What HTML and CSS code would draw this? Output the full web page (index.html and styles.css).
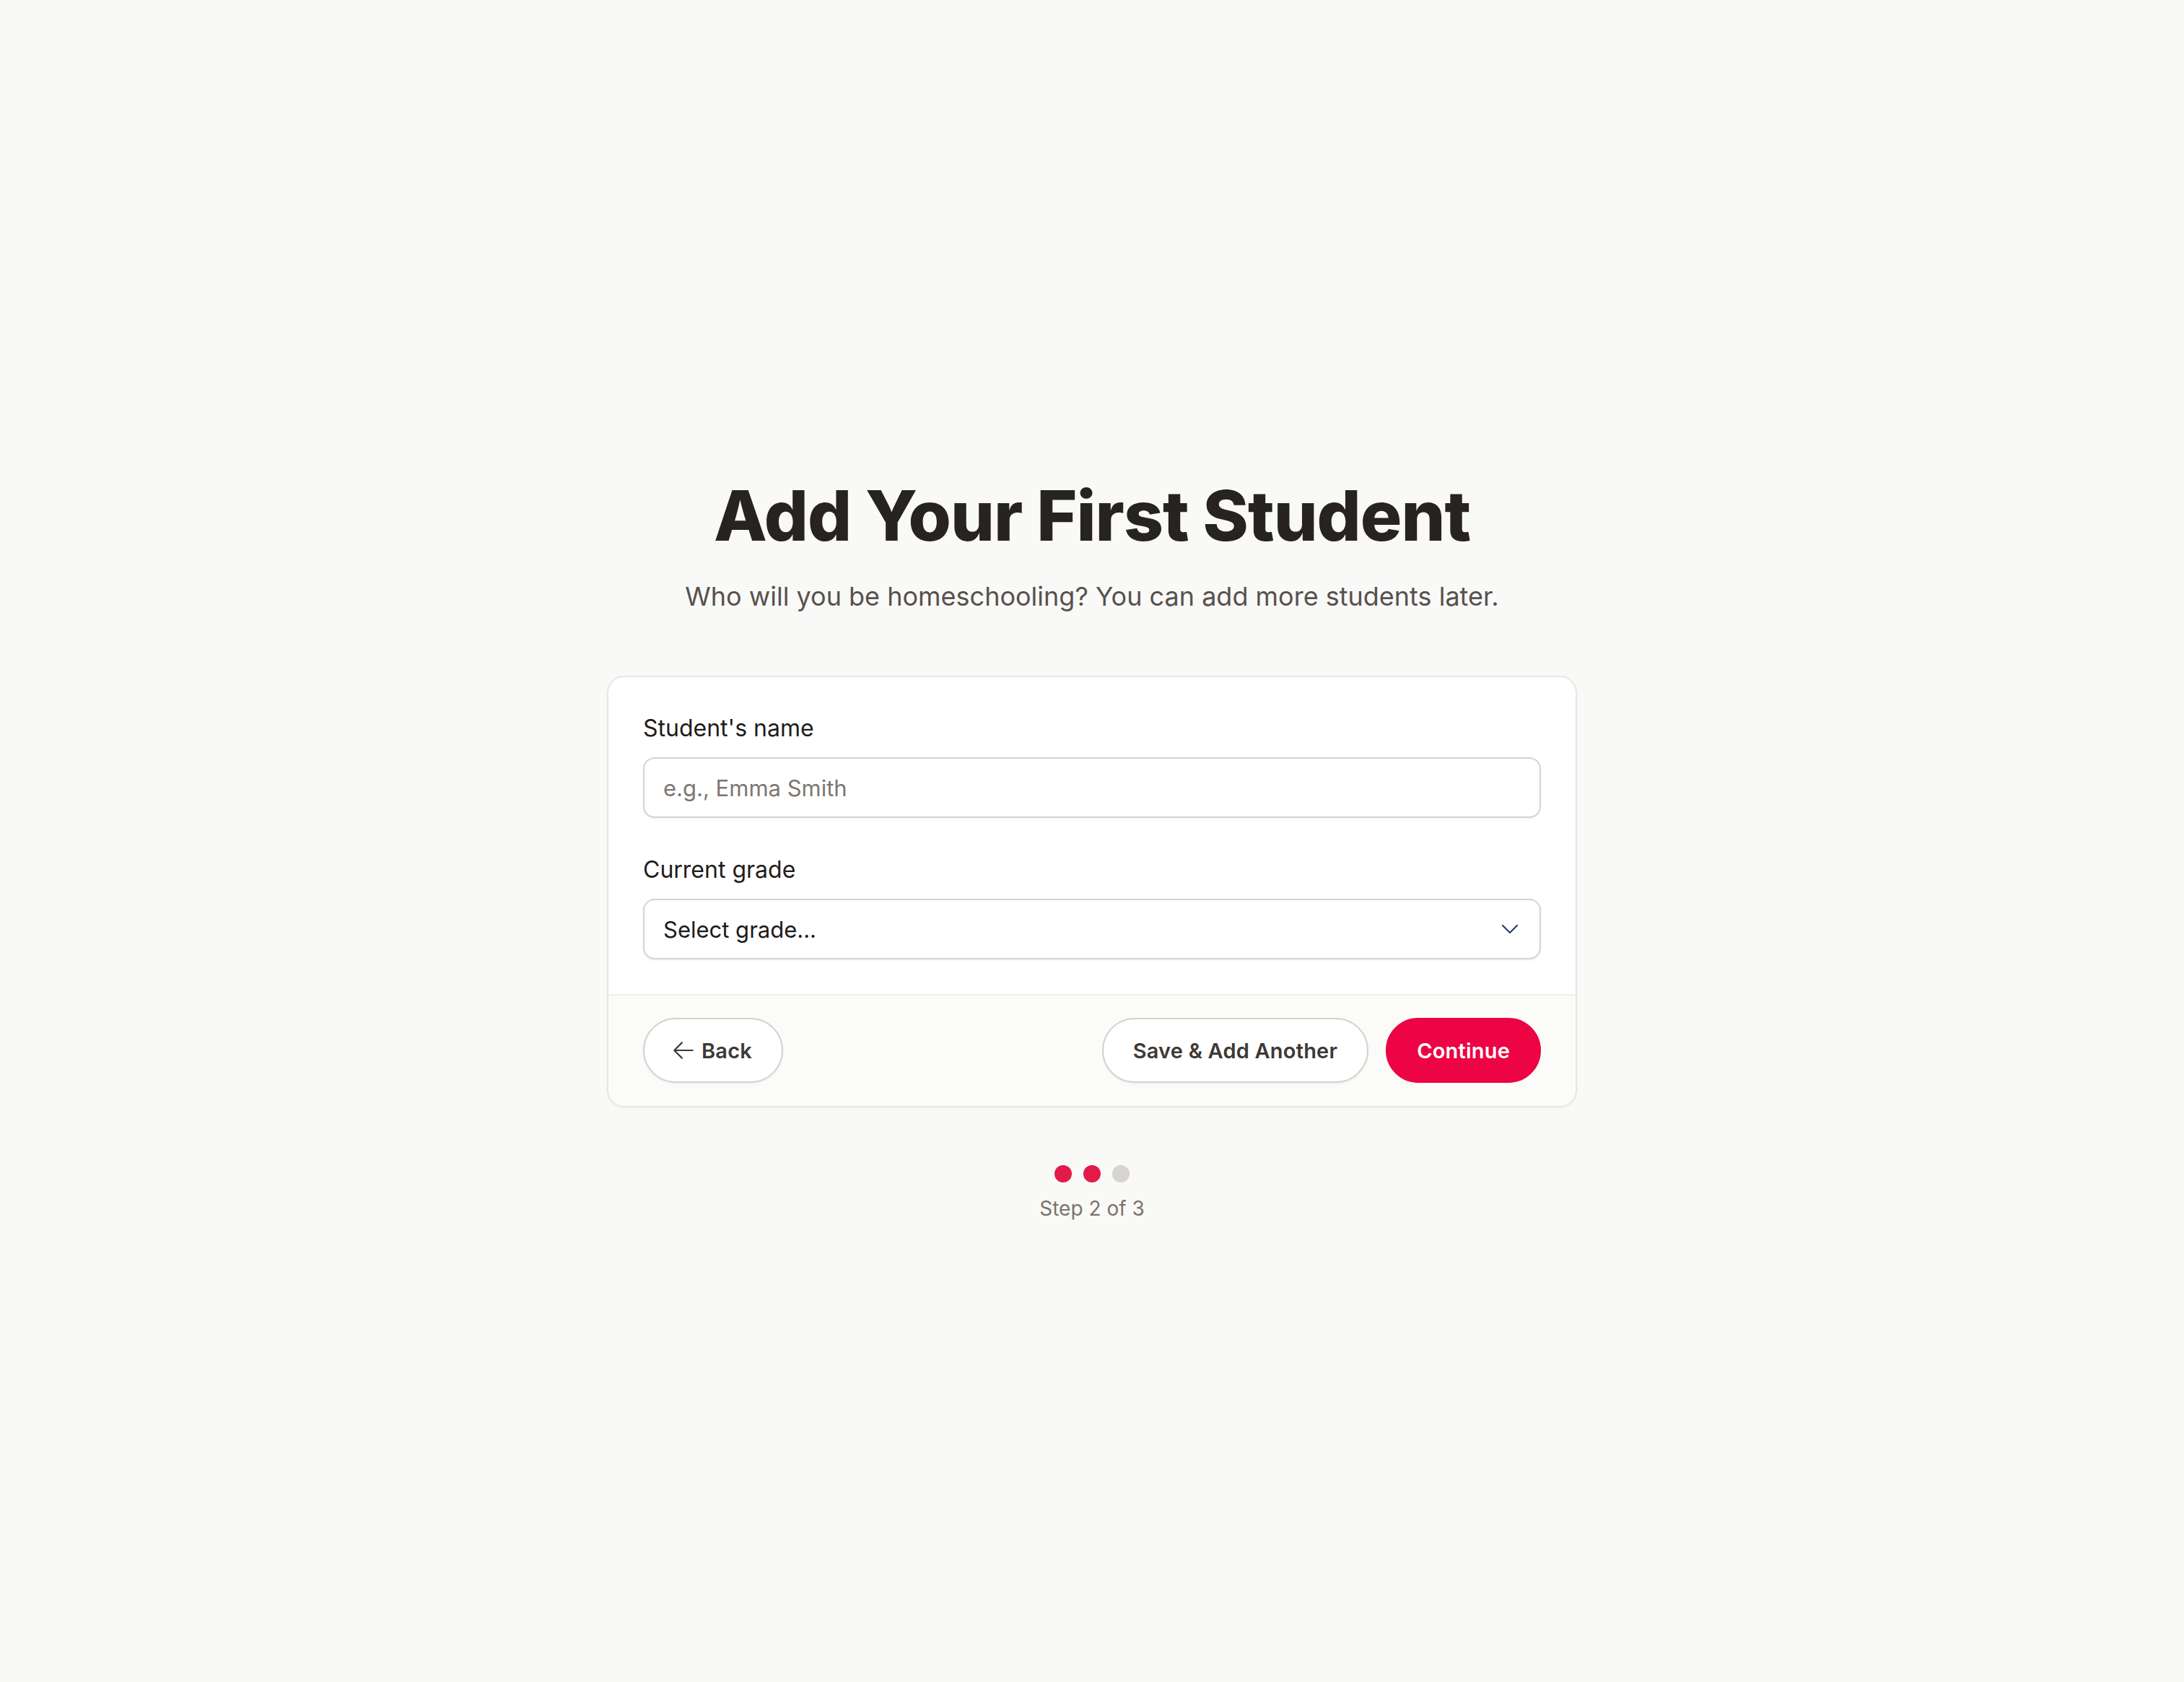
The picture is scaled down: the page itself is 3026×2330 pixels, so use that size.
FILE: index.html
```html
<!DOCTYPE html>
<html lang="en">
<head>
<meta charset="utf-8">
<title>Add Your First Student</title>
<link rel="stylesheet" href="styles.css">
</head>
<body>
<main class="page">
  <div class="wrap">
    <h1 class="title">Add Your First Student</h1>
    <p class="subtitle">Who will you be homeschooling? You can add more students later.</p>

    <section class="card">
      <div class="card-body">
        <div class="field">
          <label class="label" for="name">Student's name</label>
          <input id="name" class="input" type="text" placeholder="e.g., Emma Smith">
        </div>
        <div class="field">
          <label class="label" for="grade">Current grade</label>
          <div class="select">
            <span class="select-text">Select grade...</span>
            <svg class="chevron" viewBox="0 0 22 12" width="22" height="12" aria-hidden="true">
              <path d="M1 1l10 10L21 1" fill="none" stroke="#2d3f6e" stroke-width="2.2" stroke-linecap="round" stroke-linejoin="round"/>
            </svg>
          </div>
        </div>
      </div>
      <div class="card-footer">
        <button class="btn btn-outline" type="button">
          <svg class="arrow" viewBox="0 0 24 24" width="34" height="34" aria-hidden="true">
            <path d="M10.5 19.5 3 12m0 0 7.5-7.5M3 12h18" fill="none" stroke="#3d3935" stroke-width="1.5" stroke-linecap="round" stroke-linejoin="round"/>
          </svg>
          <span>Back</span>
        </button>
        <div class="actions">
          <button class="btn btn-outline" type="button">Save &amp; Add Another</button>
          <button class="btn btn-primary" type="button">Continue</button>
        </div>
      </div>
    </section>

    <div class="progress">
      <div class="dots">
        <span class="dot dot-on"></span>
        <span class="dot dot-on"></span>
        <span class="dot"></span>
      </div>
      <p class="step">Step 2 of 3</p>
    </div>
  </div>
</main>
</body>
</html>
```

FILE: styles.css
```css
* { box-sizing: border-box; }

html, body {
  margin: 0;
  padding: 0;
  background: #f9f9f8;
}

body {
  font-family: "Inter", "Noto Sans", "Liberation Sans", sans-serif;
  color: #1f1c1a;
}

.page {
  min-height: 100vh;
  display: flex;
  align-items: center;
  justify-content: center;
  padding: 14px 48px 0;
}

.wrap {
  width: 1344px;
  display: flex;
  flex-direction: column;
  align-items: center;
}

.title {
  margin: 0;
  font-family: "Inter", "Noto Sans", sans-serif;
  font-weight: 800;
  font-size: 96px;
  line-height: 128px;
  letter-spacing: -1px;
  color: #272322;
  text-align: center;
}

.subtitle {
  margin: 20px 0 0;
  font-size: 36px;
  line-height: 56px;
  color: #57514d;
  text-align: center;
}

.card {
  margin-top: 82px;
  width: 100%;
  background: #ffffff;
  border: 2px solid #e8e6e3;
  border-radius: 24px;
  box-shadow: 0 2px 4px rgba(0, 0, 0, 0.04);
  overflow: hidden;
}

.card-body {
  padding: 49px 48px 48px;
  display: flex;
  flex-direction: column;
  gap: 50px;
}

.field {
  display: flex;
  flex-direction: column;
}

.label {
  font-size: 32px;
  line-height: 44px;
  font-weight: 400;
  color: #1f1c1a;
  margin-bottom: 18px;
}

.input,
.select {
  width: 100%;
  height: 84px;
  border: 2px solid #d6d2ce;
  border-radius: 16px;
  background: #ffffff;
  box-shadow: 0 2px 3px rgba(0, 0, 0, 0.04);
  font-family: inherit;
  font-size: 31px;
  padding: 0 26px;
  color: #1f1c1a;
  outline: none;
}

.input::placeholder {
  color: #7d7671;
}

.select {
  display: flex;
  align-items: center;
  justify-content: space-between;
  padding-right: 30px;
}

.select-text {
  color: #1c1a18;
}

.chevron {
  display: block;
}

.card-footer {
  background: #fbfbf9;
  border-top: 2px solid #f1efed;
  padding: 31px 48px 32px;
  display: flex;
  align-items: center;
  justify-content: space-between;
}

.actions {
  display: flex;
  gap: 24px;
}

.btn {
  height: 90px;
  border-radius: 999px;
  padding: 0 41px;
  font-family: "Inter", "Noto Sans", sans-serif;
  font-weight: 600;
  font-size: 29px;
  letter-spacing: 0.2px;
  display: inline-flex;
  align-items: center;
  gap: 8px;
  cursor: pointer;
}

.btn-outline {
  background: #ffffff;
  border: 2px solid #d6d2ce;
  color: #3d3935;
  box-shadow: 0 2px 3px rgba(0, 0, 0, 0.04);
}

.btn-primary {
  background: #ec0444;
  border: 2px solid #ec0444;
  color: #ffffff;
}

.arrow {
  display: block;
  margin-left: -4px;
}

.progress {
  margin-top: 80px;
  display: flex;
  flex-direction: column;
  align-items: center;
}

.dots {
  display: flex;
  gap: 16px;
}

.dot {
  width: 24px;
  height: 24px;
  border-radius: 50%;
  background: #d6d3d0;
}

.dot-on {
  background: #e31b4b;
}

.step {
  margin: 16px 0 0;
  font-size: 28px;
  line-height: 40px;
  color: #7a726d;
}
```
